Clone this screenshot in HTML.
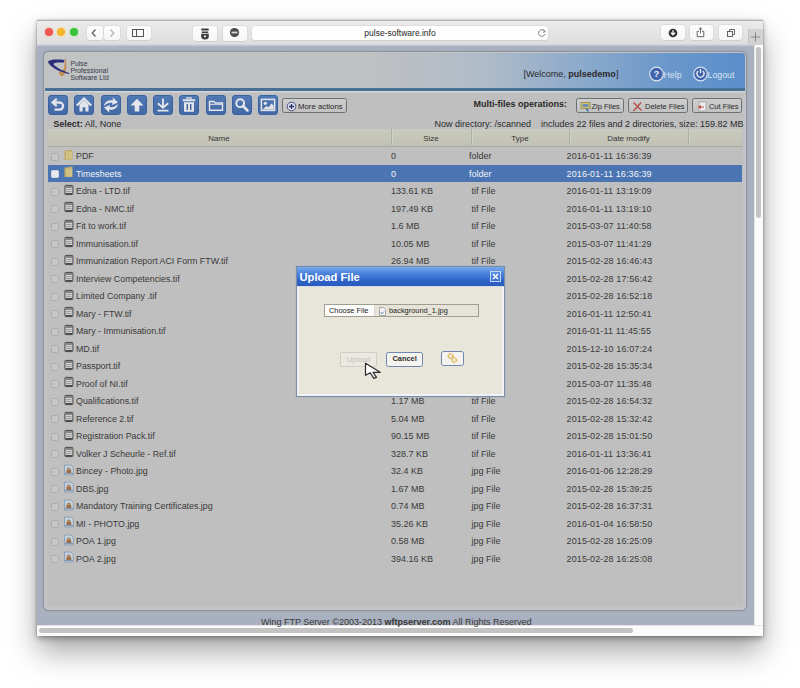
<!DOCTYPE html>
<html><head><meta charset="utf-8">
<style>
*{box-sizing:border-box;margin:0;padding:0}
html,body{width:800px;height:688px;overflow:hidden;background:#fff;font-family:"Liberation Sans",sans-serif;position:relative}
div,span,i,b{position:absolute}
b{position:static}
#win{left:37px;top:20px;width:726px;height:616px;background:#a9b0bf;box-shadow:0 3px 6px rgba(0,0,0,0.28),0 16px 28px rgba(0,0,0,0.34),0 0 2px rgba(0,0,0,0.3)}
#tb{left:37px;top:20px;width:726px;height:24.5px;background:linear-gradient(#ebebeb,#dedede);border-top:1px solid #b3b3b3;border-bottom:1px solid #d6d7dc}
.tl{top:28px;width:8px;height:8px;border-radius:50%}
.tbtn{background:linear-gradient(#fdfdfd,#f6f6f6);border-radius:3px;box-shadow:0 0 0 0.5px #d2d2d2,0 0.5px 0.5px #bcbcbc}
#url{left:252px;top:26px;width:296px;height:14px;background:#fefefe;border-radius:3px;box-shadow:0 0 0 0.5px #d2d2d2,0 0.5px 0.5px #bcbcbc;font-size:8.5px;text-align:center;line-height:14px;color:#1e1e1e}
#panel{left:43.5px;top:52px;width:702.5px;height:557.5px;background:#bfbfbf;border:1.5px solid #c3c4c8;border-top-width:1px;border-radius:4px;overflow:hidden;box-shadow:0 0 0 1.2px #8e949c,inset 2px 0 0 #c3c4c8,inset -2px 0 0 #c0c3c8,inset 0 -2px 0 #c3c4c6}
#hdr{left:0;top:0;width:701px;height:38px;background:linear-gradient(90deg,#c2c3c4 0%,#bfc0c2 46%,#b0bcc8 62%,#8eabcb 76%,#6a97ca 89%,#5a8ecb 100%);border-bottom:3px solid #4a6f94;box-shadow:0 1.5px 0 #d2d6da}
.ico{top:42px;width:20px;height:20px;background:linear-gradient(#5079b5,#4469a4);border:1px solid #3d6099;border-radius:3px;box-shadow:0 0 0 1px #b9c1cd}
.ico svg{margin:-1px}
.ico svg{position:absolute;left:0;top:0}
.btn{height:15px;border:1.3px solid #6c6f74;border-radius:2.5px;background:linear-gradient(#cdcdcd,#c2c2c2);white-space:nowrap}
.bt{top:0.8px;font-size:7.5px;line-height:13px;color:#2a2a2a;white-space:nowrap}
.t{white-space:nowrap;font-size:9px;color:#2a2a2a;line-height:11px}
.row{left:4px;width:694px;height:17.5px;font-size:9px;color:#3a3a3a;line-height:19px;white-space:nowrap}
.row span{top:0}
.sel{background:#4a74b2;color:#f2f4f8}
.cb{left:3px;top:5.5px;width:8px;height:8px;border:1px solid #adadad;background:#c6c6c6;border-radius:1.5px}
.sel .cb{background:#e6e9ee;border-color:#d0d6df}
.c1{left:28px;font-size:8.85px}.c2{left:343px}.c3{left:421px}.c4{left:518.5px;letter-spacing:0.12px}
.fi{position:absolute;left:16px;top:1.5px}
#thead{left:3px;top:75.5px;width:694px;height:18px;background:linear-gradient(#cacbbe,#c1c2b5);border-bottom:1.5px solid #a9aa9f;font-size:8px;color:#363636;line-height:19px}
.th{top:0;height:16.5px;text-align:center;border-right:1px solid #adaea2;box-shadow:1px 0 0 #d0d1c6}
#dlg{left:296px;top:266px;width:208.5px;height:131px;background:#e8e5db;border:1px solid #7e8ba4;box-shadow:0 0 0 0.5px #aab2c0,inset 2px 0 0 #f1f2f4,inset -2px 0 0 #f1f2f4,inset 0 -2px 0 #f1f2f4}
#dlgt{left:0;top:0;width:206.5px;height:20px;background:linear-gradient(#79aaee,#4a82dc 35%,#2d62c6 75%,#2a5cbe);color:#fff;font-weight:bold;font-size:11.2px;line-height:21px;padding-left:2.5px;border-bottom:1px solid #d6dde8}
</style></head><body>
<div id="win"></div>
<div style="left:37px;top:44px;width:717px;height:3px;background:linear-gradient(#d2d5db,#aab0bf)"></div>
<div id="tb">
</div>
<div class="tl" style="left:44.5px;background:#ee5850;box-shadow:0 0 0 1px #f6c9c4"></div>
<div class="tl" style="left:57.3px;background:#f2b52c;box-shadow:0 0 0 1px #f5dfae"></div>
<div class="tl" style="left:70px;background:#3cc33b;box-shadow:0 0 0 1px #c4e8c2"></div>
<div class="tbtn" style="left:87px;top:25.5px;width:15.5px;height:14.5px"></div>
<div class="tbtn" style="left:103.5px;top:25.5px;width:16.5px;height:14.5px"></div>
<svg style="position:absolute;left:87px;top:25px" width="34" height="16"><path d="M8.5 4.5 L5.2 8 L8.5 11.5" fill="none" stroke="#5a5a5a" stroke-width="1.2"/><path d="M23.5 4.5 L26.8 8 L23.5 11.5" fill="none" stroke="#b3b3b3" stroke-width="1.2"/></svg>
<div class="tbtn" style="left:126.5px;top:25.5px;width:24.5px;height:14.5px"></div>
<svg style="position:absolute;left:126px;top:25px" width="26" height="16"><rect x="6.5" y="4.5" width="11" height="7" fill="none" stroke="#555" stroke-width="1"/><line x1="10.5" y1="4.5" x2="10.5" y2="11.5" stroke="#555" stroke-width="1"/></svg>
<div class="tbtn" style="left:192.5px;top:25.5px;width:24.5px;height:15px"></div>
<div class="tbtn" style="left:222.5px;top:25.5px;width:24px;height:15px"></div>
<svg style="position:absolute;left:192px;top:24px" width="56" height="16"><path d="M9.3 4.5 h7.4 v2.1 h-7.4z M9.8 7.5 h6.4 v1.5 h-6.4z M9.2 9.8 h7.6 v2.4 a3.8 3.2 0 0 1 -7.6 0z" fill="#3c3c3c"/><circle cx="13" cy="12.3" r="1.1" fill="#f2f2f2"/><circle cx="42.5" cy="8.5" r="4.6" fill="#4a4a4a"/><path d="M39.5 7.6 h6 v1.8 h-6z" fill="#d8d8d8"/></svg>
<div id="url">pulse-software.info</div>
<svg style="position:absolute;left:535.5px;top:26.5px" width="12" height="12"><path d="M8.6 4.2 A3.3 3.3 0 1 0 9 7" fill="none" stroke="#777" stroke-width="0.9"/><path d="M7.2 2.6 L9.3 4.5 L7 5.4" fill="none" stroke="#777" stroke-width="0.9"/></svg>
<div class="tbtn" style="left:660.5px;top:25px;width:24px;height:15px"></div>
<div class="tbtn" style="left:689.5px;top:25px;width:23.5px;height:15px"></div>
<div class="tbtn" style="left:719px;top:25px;width:23px;height:15px"></div>
<svg style="position:absolute;left:660px;top:24px" width="84" height="18"><circle cx="13" cy="9" r="4.3" fill="#2f2f2f"/><path d="M13 6.3 v4.2 M10.9 8.6 L13 10.8 L15.1 8.6" fill="none" stroke="#fff" stroke-width="1.3"/>
<path d="M39 7.3 h-1.8 v5.4 h6.6 v-5.4 h-1.8" fill="none" stroke="#555" stroke-width="0.9"/><path d="M40.5 9.5 v-5.4 M39 5.3 l1.5 -1.4 l1.5 1.4" fill="none" stroke="#555" stroke-width="0.9"/>
<rect x="67.5" y="7.5" width="5" height="5" fill="none" stroke="#555" stroke-width="0.9"/><path d="M69.5 7.5 v-2 h5 v5 h-2" fill="none" stroke="#555" stroke-width="0.9"/></svg>
<div style="left:748px;top:29px;width:15px;height:16px;background:#d2d2d2;border-left:1px solid #c4c4c4"></div>
<svg style="position:absolute;left:748px;top:29px" width="15" height="16"><path d="M7.5 3.5 v9 M3 8 h9" stroke="#6e6e6e" stroke-width="0.75"/></svg>
<!-- scrollbars -->
<div style="left:754px;top:45px;width:9px;height:580px;background:#fbfbfb;border-left:1px solid #e4e4e4"></div>
<div style="left:756px;top:47px;width:5px;height:171px;background:#c3c3c3;border-radius:3px"></div>
<div style="left:37px;top:625px;width:726px;height:11px;background:#fbfbfb;border-top:1px solid #e4e4e4"></div>
<div style="left:39px;top:628px;width:594px;height:5px;background:#c3c3c3;border-radius:3px"></div>

<div id="panel">
  <div id="hdr">
    <svg style="position:absolute;left:2px;top:2px" width="72" height="30">
      <path d="M18.2 1.8 C19.5 5 19.8 10 19 15 C18.6 18 17.5 20.5 15 21.5 C13 20.5 11.8 18.5 11.5 16.5 C14 17.5 16.5 16 17.2 12 C17.8 8.5 17.8 5 18.2 1.8z" fill="#c8884a" opacity="0.9"/>
      <path d="M0.8 6.8 C2.5 4.5 9 4.2 17.5 5 L17 7.6 C12 7.2 7.5 7.5 6.5 9 C8 12 15 15.5 22.8 18.2 L21.5 19 C13 17 3 12.5 0.8 6.8z" fill="#2b2f7a"/>
      <text x="23.5" y="11" font-size="6.8" fill="#353a4a" font-family="Liberation Sans">Pulse</text>
      <text x="23.5" y="18" font-size="6.8" fill="#353a4a" font-family="Liberation Sans">Professional</text>
      <text x="23.5" y="25" font-size="6.8" fill="#353a4a" font-family="Liberation Sans">Software Ltd</text>
    </svg>
    <div class="t" style="left:479px;top:16px;color:#2a2a2a;font-size:9px">[Welcome, <b>pulsedemo</b>]</div>
    <svg style="position:absolute;left:602px;top:12px" width="96" height="18">
      <circle cx="9.5" cy="9" r="6.8" fill="#4264ab" stroke="#d9e3ef" stroke-width="1.2"/>
      <text x="9.5" y="12.3" font-size="9.5" font-weight="bold" fill="#e9eef8" text-anchor="middle" font-family="Liberation Sans">?</text>
      <circle cx="53.5" cy="9" r="6.8" fill="#4264ab" stroke="#d9e3ef" stroke-width="1.2"/>
      <path d="M51 6 A3.6 3.6 0 1 0 56 6" fill="none" stroke="#e9eef8" stroke-width="1.4"/><path d="M53.5 4 v4" stroke="#e9eef8" stroke-width="1.4"/>
    </svg>
    <div class="t" style="left:619px;top:16.5px;color:#dae4f0;font-size:8.8px">Help</div>
    <div class="t" style="left:663px;top:16.5px;color:#dae4f0;font-size:8.8px">Logout</div>
  </div>
  <!-- toolbar -->
  <div class="ico" style="left:3px"><svg width="20" height="20"><path d="M6 7.5 H11.5 A3.6 3.6 0 0 1 11.5 14.7 H6.5" fill="none" stroke="#e3e5ea" stroke-width="2.3"/><path d="M8.8 3.8 L4.6 7.5 L8.8 11.2" fill="none" stroke="#e3e5ea" stroke-width="2.3"/></svg></div>
  <div class="ico" style="left:29.5px"><svg width="20" height="20"><path d="M2.8 10.5 L10 3.6 L17.2 10.5" fill="none" stroke="#e3e5ea" stroke-width="2.2"/><path d="M5.5 9.5 L10 5.5 L14.5 9.5 V16.5 H11.4 V12.3 H8.6 V16.5 H5.5z" fill="#e3e5ea"/></svg></div>
  <div class="ico" style="left:56px"><svg width="20" height="20"><path d="M3 11.2 C3.3 6.5 8 4.6 12 5.3 L11.6 2.2 L17 7.4 L11 9.9 L11.5 7.9 C8 7.2 4.8 8.6 3 11.2z" fill="#e3e5ea"/><path d="M17 8.8 C16.7 13.5 12 15.4 8 14.7 L8.4 17.8 L3 12.6 L9 10.1 L8.5 12.1 C12 12.8 15.2 11.4 17 8.8z" fill="#e3e5ea"/></svg></div>
  <div class="ico" style="left:82px"><svg width="20" height="20"><path d="M3.5 10.5 L10 3.8 L16.5 10.5 H12.3 V16.5 H7.7 V10.5z" fill="#e3e5ea"/></svg></div>
  <div class="ico" style="left:108px"><svg width="20" height="20"><path d="M10 3.5 V12.5 M4.8 8.2 L10 12.8 L15.2 8.2 M4.5 15.6 H15.5" fill="none" stroke="#e3e5ea" stroke-width="1.9"/></svg></div>
  <div class="ico" style="left:134.5px"><svg width="20" height="20"><path d="M3.8 5.2 H16.2" stroke="#e3e5ea" stroke-width="2"/><path d="M8 4.2 V2.8 H12 V4.2" fill="none" stroke="#e3e5ea" stroke-width="1.3"/><path d="M5 7.2 H15 V16.8 H5z" fill="#e3e5ea"/><path d="M8.3 9 V15 M11.7 9 V15" stroke="#3f5f8f" stroke-width="1.4"/></svg></div>
  <div class="ico" style="left:161px"><svg width="20" height="20"><path d="M3.5 6.5 H8 L9.3 8 H16.5 V15.3 H3.5z" fill="none" stroke="#e3e5ea" stroke-width="1.4"/><path d="M3.5 9.3 H16.5" stroke="#e3e5ea" stroke-width="1"/></svg></div>
  <div class="ico" style="left:187px"><svg width="20" height="20"><circle cx="8.2" cy="8.2" r="3.9" fill="none" stroke="#e3e5ea" stroke-width="2"/><path d="M11 11 L15.5 15.5" stroke="#e3e5ea" stroke-width="2.6" stroke-linecap="round"/></svg></div>
  <div class="ico" style="left:213.5px"><svg width="20" height="20"><rect x="3.4" y="4.4" width="13.2" height="11" fill="none" stroke="#e3e5ea" stroke-width="1.5"/><circle cx="7.3" cy="8.3" r="1.6" fill="#e3e5ea"/><path d="M4.5 14.5 L8.5 11 L10.5 12.2 L13.5 8.5 L15.6 10.5 V14.5z" fill="#e3e5ea"/></svg></div>
  <div class="btn" style="left:237.5px;top:45px;width:64.5px"><svg style="position:absolute;left:3px;top:1.7px" width="11" height="11"><circle cx="5.5" cy="5.5" r="4.3" fill="#dadfea" stroke="#4a4f80" stroke-width="1"/><path d="M5.5 3 V8 M3 5.5 H8" stroke="#2c3170" stroke-width="1.3"/></svg><span class="bt" style="left:15px;font-size:7.8px">More actions</span></div>
  <div class="t" style="left:429px;top:46px;font-weight:bold;font-size:9px">Multi-files operations:</div>
  <div class="btn" style="left:531px;top:45px;width:48.5px"><svg style="position:absolute;left:3px;top:2px" width="12" height="11"><rect x="1" y="1.5" width="9" height="6" fill="#d9c35a" stroke="#8c8c6a" stroke-width="0.8"/><rect x="2.5" y="3" width="6" height="3" fill="#6f8fb8"/><path d="M6 7.5 L8.5 10.5" stroke="#3a6aa8" stroke-width="1.2"/></svg><span class="bt" style="left:15px">Zip Files</span></div>
  <div class="btn" style="left:583.5px;top:45px;width:59.5px"><svg style="position:absolute;left:3px;top:2px" width="11" height="11"><path d="M1.5 1.5 L9.5 9.5 M9 1.5 L1.5 10" stroke="#b84a44" stroke-width="1.3"/></svg><span class="bt" style="left:16px">Delete Files</span></div>
  <div class="btn" style="left:647.4px;top:45px;width:50px"><svg style="position:absolute;left:3px;top:2px" width="12" height="11"><rect x="3" y="1" width="7" height="9" fill="#ececec" stroke="#9a9a9a" stroke-width="0.7"/><path d="M1.5 6 L5 4 L5 8z" fill="#c0504a"/><path d="M4.5 6 H8" stroke="#c0504a" stroke-width="1"/></svg><span class="bt" style="left:16px">Cut Files</span></div>
  <div class="t" style="left:8.8px;top:66px;font-size:9px"><b>Select:</b> All, None</div>
  <div class="t" style="left:390px;top:66px;font-size:9px">Now directory: /scanned</div>
  <div class="t" style="left:496.5px;top:66px;font-size:9px">includes 22 files and 2 directories, size: 159.82 MB</div>
  <div id="thead">
    <div class="th" style="left:0;width:344px">Name</div>
    <div class="th" style="left:344px;width:80px">Size</div>
    <div class="th" style="left:424px;width:98px">Type</div>
    <div class="th" style="left:522px;width:119px">Date modify</div>
  </div>
</div>
<div id="rows" style="left:44px;top:0;width:703px;height:611px">
<div class="row" style="top:147.0px"><i class="cb"></i><svg class="fi" width="10" height="12"><path d="M0.5 1.5 H3.5 L4.3 0.8 H8.5 V11 H0.5z" fill="#c2ad6e"/><path d="M1 2.6 H8 V10.5 H1z" fill="#d3c288"/><path d="M1.3 2.6 V10.5" stroke="#b09a58" stroke-width="0.8"/><path d="M4.6 2.6 V10.5" stroke="#c4b172" stroke-width="0.6"/></svg><span class="c1">PDF</span><span class="c2">0</span><span class="c3" style="left:421px">folder</span><span class="c4">2016-01-11 16:36:39</span></div>
<div class="row sel" style="top:164.5px"><i class="cb"></i><svg class="fi" width="10" height="12"><path d="M0.5 1.5 H3.5 L4.3 0.8 H8.5 V11 H0.5z" fill="#c2ad6e"/><path d="M1 2.6 H8 V10.5 H1z" fill="#d3c288"/><path d="M1.3 2.6 V10.5" stroke="#b09a58" stroke-width="0.8"/><path d="M4.6 2.6 V10.5" stroke="#c4b172" stroke-width="0.6"/></svg><span class="c1">Timesheets</span><span class="c2">0</span><span class="c3" style="left:421px">folder</span><span class="c4">2016-01-11 16:36:39</span></div>
<div class="row" style="top:182.0px"><i class="cb"></i><svg class="fi" width="10" height="12"><rect x="0.9" y="1.4" width="8" height="9.2" rx="0.8" fill="#d2d2d2" stroke="#474747" stroke-width="1"/><path d="M1.5 3 H8.3" stroke="#5a5a5a" stroke-width="1.3"/><path d="M2.2 5.6 H7.6 M2.2 7.6 H7.6" stroke="#8a8a8a" stroke-width="0.8"/><path d="M1.5 9.6 H8.3" stroke="#3c3c3c" stroke-width="1"/></svg><span class="c1">Edna - LTD.tif</span><span class="c2">133.61 KB</span><span class="c3" style="left:423.5px">tif File</span><span class="c4">2016-01-11 13:19:09</span></div>
<div class="row" style="top:199.5px"><i class="cb"></i><svg class="fi" width="10" height="12"><rect x="0.9" y="1.4" width="8" height="9.2" rx="0.8" fill="#d2d2d2" stroke="#474747" stroke-width="1"/><path d="M1.5 3 H8.3" stroke="#5a5a5a" stroke-width="1.3"/><path d="M2.2 5.6 H7.6 M2.2 7.6 H7.6" stroke="#8a8a8a" stroke-width="0.8"/><path d="M1.5 9.6 H8.3" stroke="#3c3c3c" stroke-width="1"/></svg><span class="c1">Edna - NMC.tif</span><span class="c2">197.49 KB</span><span class="c3" style="left:423.5px">tif File</span><span class="c4">2016-01-11 13:19:10</span></div>
<div class="row" style="top:217.0px"><i class="cb"></i><svg class="fi" width="10" height="12"><rect x="0.9" y="1.4" width="8" height="9.2" rx="0.8" fill="#d2d2d2" stroke="#474747" stroke-width="1"/><path d="M1.5 3 H8.3" stroke="#5a5a5a" stroke-width="1.3"/><path d="M2.2 5.6 H7.6 M2.2 7.6 H7.6" stroke="#8a8a8a" stroke-width="0.8"/><path d="M1.5 9.6 H8.3" stroke="#3c3c3c" stroke-width="1"/></svg><span class="c1">Fit to work.tif</span><span class="c2">1.6 MB</span><span class="c3" style="left:423.5px">tif File</span><span class="c4">2015-03-07 11:40:58</span></div>
<div class="row" style="top:234.5px"><i class="cb"></i><svg class="fi" width="10" height="12"><rect x="0.9" y="1.4" width="8" height="9.2" rx="0.8" fill="#d2d2d2" stroke="#474747" stroke-width="1"/><path d="M1.5 3 H8.3" stroke="#5a5a5a" stroke-width="1.3"/><path d="M2.2 5.6 H7.6 M2.2 7.6 H7.6" stroke="#8a8a8a" stroke-width="0.8"/><path d="M1.5 9.6 H8.3" stroke="#3c3c3c" stroke-width="1"/></svg><span class="c1">Immunisation.tif</span><span class="c2">10.05 MB</span><span class="c3" style="left:423.5px">tif File</span><span class="c4">2015-03-07 11:41:29</span></div>
<div class="row" style="top:252.0px"><i class="cb"></i><svg class="fi" width="10" height="12"><rect x="0.9" y="1.4" width="8" height="9.2" rx="0.8" fill="#d2d2d2" stroke="#474747" stroke-width="1"/><path d="M1.5 3 H8.3" stroke="#5a5a5a" stroke-width="1.3"/><path d="M2.2 5.6 H7.6 M2.2 7.6 H7.6" stroke="#8a8a8a" stroke-width="0.8"/><path d="M1.5 9.6 H8.3" stroke="#3c3c3c" stroke-width="1"/></svg><span class="c1">Immunization Report ACI Form FTW.tif</span><span class="c2">26.94 MB</span><span class="c3" style="left:423.5px">tif File</span><span class="c4">2015-02-28 16:46:43</span></div>
<div class="row" style="top:269.5px"><i class="cb"></i><svg class="fi" width="10" height="12"><rect x="0.9" y="1.4" width="8" height="9.2" rx="0.8" fill="#d2d2d2" stroke="#474747" stroke-width="1"/><path d="M1.5 3 H8.3" stroke="#5a5a5a" stroke-width="1.3"/><path d="M2.2 5.6 H7.6 M2.2 7.6 H7.6" stroke="#8a8a8a" stroke-width="0.8"/><path d="M1.5 9.6 H8.3" stroke="#3c3c3c" stroke-width="1"/></svg><span class="c1">Interview Competencies.tif</span><span class="c2">2.51 MB</span><span class="c3" style="left:423.5px">tif File</span><span class="c4">2015-02-28 17:56:42</span></div>
<div class="row" style="top:287.0px"><i class="cb"></i><svg class="fi" width="10" height="12"><rect x="0.9" y="1.4" width="8" height="9.2" rx="0.8" fill="#d2d2d2" stroke="#474747" stroke-width="1"/><path d="M1.5 3 H8.3" stroke="#5a5a5a" stroke-width="1.3"/><path d="M2.2 5.6 H7.6 M2.2 7.6 H7.6" stroke="#8a8a8a" stroke-width="0.8"/><path d="M1.5 9.6 H8.3" stroke="#3c3c3c" stroke-width="1"/></svg><span class="c1">Limited Company .tif</span><span class="c2">1.02 MB</span><span class="c3" style="left:423.5px">tif File</span><span class="c4">2015-02-28 16:52:18</span></div>
<div class="row" style="top:304.5px"><i class="cb"></i><svg class="fi" width="10" height="12"><rect x="0.9" y="1.4" width="8" height="9.2" rx="0.8" fill="#d2d2d2" stroke="#474747" stroke-width="1"/><path d="M1.5 3 H8.3" stroke="#5a5a5a" stroke-width="1.3"/><path d="M2.2 5.6 H7.6 M2.2 7.6 H7.6" stroke="#8a8a8a" stroke-width="0.8"/><path d="M1.5 9.6 H8.3" stroke="#3c3c3c" stroke-width="1"/></svg><span class="c1">Mary - FTW.tif</span><span class="c2">4.22 MB</span><span class="c3" style="left:423.5px">tif File</span><span class="c4">2016-01-11 12:50:41</span></div>
<div class="row" style="top:322.0px"><i class="cb"></i><svg class="fi" width="10" height="12"><rect x="0.9" y="1.4" width="8" height="9.2" rx="0.8" fill="#d2d2d2" stroke="#474747" stroke-width="1"/><path d="M1.5 3 H8.3" stroke="#5a5a5a" stroke-width="1.3"/><path d="M2.2 5.6 H7.6 M2.2 7.6 H7.6" stroke="#8a8a8a" stroke-width="0.8"/><path d="M1.5 9.6 H8.3" stroke="#3c3c3c" stroke-width="1"/></svg><span class="c1">Mary - Immunisation.tif</span><span class="c2">3.85 MB</span><span class="c3" style="left:423.5px">tif File</span><span class="c4">2016-01-11 11:45:55</span></div>
<div class="row" style="top:339.5px"><i class="cb"></i><svg class="fi" width="10" height="12"><rect x="0.9" y="1.4" width="8" height="9.2" rx="0.8" fill="#d2d2d2" stroke="#474747" stroke-width="1"/><path d="M1.5 3 H8.3" stroke="#5a5a5a" stroke-width="1.3"/><path d="M2.2 5.6 H7.6 M2.2 7.6 H7.6" stroke="#8a8a8a" stroke-width="0.8"/><path d="M1.5 9.6 H8.3" stroke="#3c3c3c" stroke-width="1"/></svg><span class="c1">MD.tif</span><span class="c2">1.12 MB</span><span class="c3" style="left:423.5px">tif File</span><span class="c4">2015-12-10 16:07:24</span></div>
<div class="row" style="top:357.0px"><i class="cb"></i><svg class="fi" width="10" height="12"><rect x="0.9" y="1.4" width="8" height="9.2" rx="0.8" fill="#d2d2d2" stroke="#474747" stroke-width="1"/><path d="M1.5 3 H8.3" stroke="#5a5a5a" stroke-width="1.3"/><path d="M2.2 5.6 H7.6 M2.2 7.6 H7.6" stroke="#8a8a8a" stroke-width="0.8"/><path d="M1.5 9.6 H8.3" stroke="#3c3c3c" stroke-width="1"/></svg><span class="c1">Passport.tif</span><span class="c2">1.44 MB</span><span class="c3" style="left:423.5px">tif File</span><span class="c4">2015-02-28 15:35:34</span></div>
<div class="row" style="top:374.5px"><i class="cb"></i><svg class="fi" width="10" height="12"><rect x="0.9" y="1.4" width="8" height="9.2" rx="0.8" fill="#d2d2d2" stroke="#474747" stroke-width="1"/><path d="M1.5 3 H8.3" stroke="#5a5a5a" stroke-width="1.3"/><path d="M2.2 5.6 H7.6 M2.2 7.6 H7.6" stroke="#8a8a8a" stroke-width="0.8"/><path d="M1.5 9.6 H8.3" stroke="#3c3c3c" stroke-width="1"/></svg><span class="c1">Proof of NI.tif</span><span class="c2">0.98 MB</span><span class="c3" style="left:423.5px">tif File</span><span class="c4">2015-03-07 11:35:48</span></div>
<div class="row" style="top:392.0px"><i class="cb"></i><svg class="fi" width="10" height="12"><rect x="0.9" y="1.4" width="8" height="9.2" rx="0.8" fill="#d2d2d2" stroke="#474747" stroke-width="1"/><path d="M1.5 3 H8.3" stroke="#5a5a5a" stroke-width="1.3"/><path d="M2.2 5.6 H7.6 M2.2 7.6 H7.6" stroke="#8a8a8a" stroke-width="0.8"/><path d="M1.5 9.6 H8.3" stroke="#3c3c3c" stroke-width="1"/></svg><span class="c1">Qualifications.tif</span><span class="c2">1.17 MB</span><span class="c3" style="left:423.5px">tif File</span><span class="c4">2015-02-28 16:54:32</span></div>
<div class="row" style="top:409.5px"><i class="cb"></i><svg class="fi" width="10" height="12"><rect x="0.9" y="1.4" width="8" height="9.2" rx="0.8" fill="#d2d2d2" stroke="#474747" stroke-width="1"/><path d="M1.5 3 H8.3" stroke="#5a5a5a" stroke-width="1.3"/><path d="M2.2 5.6 H7.6 M2.2 7.6 H7.6" stroke="#8a8a8a" stroke-width="0.8"/><path d="M1.5 9.6 H8.3" stroke="#3c3c3c" stroke-width="1"/></svg><span class="c1">Reference 2.tif</span><span class="c2">5.04 MB</span><span class="c3" style="left:423.5px">tif File</span><span class="c4">2015-02-28 15:32:42</span></div>
<div class="row" style="top:427.0px"><i class="cb"></i><svg class="fi" width="10" height="12"><rect x="0.9" y="1.4" width="8" height="9.2" rx="0.8" fill="#d2d2d2" stroke="#474747" stroke-width="1"/><path d="M1.5 3 H8.3" stroke="#5a5a5a" stroke-width="1.3"/><path d="M2.2 5.6 H7.6 M2.2 7.6 H7.6" stroke="#8a8a8a" stroke-width="0.8"/><path d="M1.5 9.6 H8.3" stroke="#3c3c3c" stroke-width="1"/></svg><span class="c1">Registration Pack.tif</span><span class="c2">90.15 MB</span><span class="c3" style="left:423.5px">tif File</span><span class="c4">2015-02-28 15:01:50</span></div>
<div class="row" style="top:444.5px"><i class="cb"></i><svg class="fi" width="10" height="12"><rect x="0.9" y="1.4" width="8" height="9.2" rx="0.8" fill="#d2d2d2" stroke="#474747" stroke-width="1"/><path d="M1.5 3 H8.3" stroke="#5a5a5a" stroke-width="1.3"/><path d="M2.2 5.6 H7.6 M2.2 7.6 H7.6" stroke="#8a8a8a" stroke-width="0.8"/><path d="M1.5 9.6 H8.3" stroke="#3c3c3c" stroke-width="1"/></svg><span class="c1">Volker J Scheurle - Ref.tif</span><span class="c2">328.7 KB</span><span class="c3" style="left:423.5px">tif File</span><span class="c4">2016-01-11 13:36:41</span></div>
<div class="row" style="top:462.0px"><i class="cb"></i><svg class="fi" width="10" height="12"><path d="M0.5 1 H7 L9.3 3.3 V11 H0.5z" fill="#c3d0de" stroke="#8397b0" stroke-width="0.8"/><path d="M2.3 9 C2.3 6 3 4 4.8 3.6 C6.6 4 7.3 6 7.3 9z" fill="#9c6f4a"/><path d="M3 5.2 H6.6" stroke="#d9b98f" stroke-width="0.7"/><path d="M1 9.6 H9" stroke="#7d93ad" stroke-width="1"/></svg><span class="c1">Bincey - Photo.jpg</span><span class="c2">32.4 KB</span><span class="c3" style="left:423.5px">jpg File</span><span class="c4">2016-01-06 12:28:29</span></div>
<div class="row" style="top:479.5px"><i class="cb"></i><svg class="fi" width="10" height="12"><path d="M0.5 1 H7 L9.3 3.3 V11 H0.5z" fill="#c3d0de" stroke="#8397b0" stroke-width="0.8"/><path d="M2.3 9 C2.3 6 3 4 4.8 3.6 C6.6 4 7.3 6 7.3 9z" fill="#9c6f4a"/><path d="M3 5.2 H6.6" stroke="#d9b98f" stroke-width="0.7"/><path d="M1 9.6 H9" stroke="#7d93ad" stroke-width="1"/></svg><span class="c1">DBS.jpg</span><span class="c2">1.67 MB</span><span class="c3" style="left:423.5px">jpg File</span><span class="c4">2015-02-28 15:39:25</span></div>
<div class="row" style="top:497.0px"><i class="cb"></i><svg class="fi" width="10" height="12"><path d="M0.5 1 H7 L9.3 3.3 V11 H0.5z" fill="#c3d0de" stroke="#8397b0" stroke-width="0.8"/><path d="M2.3 9 C2.3 6 3 4 4.8 3.6 C6.6 4 7.3 6 7.3 9z" fill="#9c6f4a"/><path d="M3 5.2 H6.6" stroke="#d9b98f" stroke-width="0.7"/><path d="M1 9.6 H9" stroke="#7d93ad" stroke-width="1"/></svg><span class="c1">Mandatory Training Certificates.jpg</span><span class="c2">0.74 MB</span><span class="c3" style="left:423.5px">jpg File</span><span class="c4">2015-02-28 16:37:31</span></div>
<div class="row" style="top:514.5px"><i class="cb"></i><svg class="fi" width="10" height="12"><path d="M0.5 1 H7 L9.3 3.3 V11 H0.5z" fill="#c3d0de" stroke="#8397b0" stroke-width="0.8"/><path d="M2.3 9 C2.3 6 3 4 4.8 3.6 C6.6 4 7.3 6 7.3 9z" fill="#9c6f4a"/><path d="M3 5.2 H6.6" stroke="#d9b98f" stroke-width="0.7"/><path d="M1 9.6 H9" stroke="#7d93ad" stroke-width="1"/></svg><span class="c1">MI - PHOTO.jpg</span><span class="c2">35.26 KB</span><span class="c3" style="left:423.5px">jpg File</span><span class="c4">2016-01-04 16:58:50</span></div>
<div class="row" style="top:532.0px"><i class="cb"></i><svg class="fi" width="10" height="12"><path d="M0.5 1 H7 L9.3 3.3 V11 H0.5z" fill="#c3d0de" stroke="#8397b0" stroke-width="0.8"/><path d="M2.3 9 C2.3 6 3 4 4.8 3.6 C6.6 4 7.3 6 7.3 9z" fill="#9c6f4a"/><path d="M3 5.2 H6.6" stroke="#d9b98f" stroke-width="0.7"/><path d="M1 9.6 H9" stroke="#7d93ad" stroke-width="1"/></svg><span class="c1">POA 1.jpg</span><span class="c2">0.58 MB</span><span class="c3" style="left:423.5px">jpg File</span><span class="c4">2015-02-28 16:25:09</span></div>
<div class="row" style="top:549.5px"><i class="cb"></i><svg class="fi" width="10" height="12"><path d="M0.5 1 H7 L9.3 3.3 V11 H0.5z" fill="#c3d0de" stroke="#8397b0" stroke-width="0.8"/><path d="M2.3 9 C2.3 6 3 4 4.8 3.6 C6.6 4 7.3 6 7.3 9z" fill="#9c6f4a"/><path d="M3 5.2 H6.6" stroke="#d9b98f" stroke-width="0.7"/><path d="M1 9.6 H9" stroke="#7d93ad" stroke-width="1"/></svg><span class="c1">POA 2.jpg</span><span class="c2">394.16 KB</span><span class="c3" style="left:423.5px">jpg File</span><span class="c4">2015-02-28 16:25:08</span></div>
</div>
<div class="t" style="left:261px;top:616.7px;font-size:9px;color:#383838">Wing FTP Server ©2003-2013 <b>wftpserver.com</b> All Rights Reserved</div>

<div id="dlg">
  <div id="dlgt">Upload File</div>
  <div style="left:193px;top:4px;width:11px;height:11px;border:1px solid #c3d5f0;background:linear-gradient(#5b8fe0,#3c70cf)"></div>
  <svg style="position:absolute;left:193px;top:4px" width="11" height="11"><path d="M3 3 L8 8 M8 3 L3 8" stroke="#fff" stroke-width="1.5"/></svg>
  <div style="left:26.5px;top:37px;width:155px;height:13px;border:1px solid #a09f92;background:#e6e3d9"></div>
  <div style="left:27.5px;top:38px;width:50px;height:11px;background:#fbfbfa;border-right:1px solid #d8d6cf"></div>
  <span style="left:32px;top:38px;font-size:7.4px;line-height:11px;color:#222;white-space:nowrap">Choose File</span>
  <svg style="position:absolute;left:82px;top:39.5px" width="7" height="9"><path d="M0.5 0.5 H4.5 L6.5 2.5 V8.5 H0.5z" fill="#f4f4f4" stroke="#8c8c8c" stroke-width="0.7"/><path d="M1.5 5 L3 7 L5 4.5" fill="none" stroke="#5a7fb5" stroke-width="0.8"/></svg>
  <span style="left:92px;top:38px;font-size:7.4px;line-height:11px;color:#222;white-space:nowrap">background_1.jpg</span>
  <div style="left:42.5px;top:85px;width:37px;height:14.5px;border:1px solid #cfcdc6;border-radius:2px;background:#ebe9e2"></div>
  <span style="left:50px;top:86px;font-size:7.4px;line-height:13px;color:#c3c2bd;white-space:nowrap">Upload</span>
  <div style="left:88.5px;top:85px;width:37px;height:15px;border:1.5px solid #6f86ad;border-radius:2.5px;background:#f4f3ef"></div>
  <span style="left:95.5px;top:85px;font-size:7.4px;font-weight:bold;line-height:13px;color:#2e2e2e;white-space:nowrap">Cancel</span>
  <div style="left:143.5px;top:83.5px;width:23.5px;height:15px;border:1.5px solid #6f86ad;border-radius:2.5px;background:#f4f3ef"></div>
  <svg style="position:absolute;left:149px;top:85px" width="13" height="12"><circle cx="4.5" cy="4" r="2.1" fill="none" stroke="#dba53a" stroke-width="1.3" stroke-dasharray="1.2 0.6"/><circle cx="4.5" cy="4" r="2.9" fill="none" stroke="#e5b95a" stroke-width="0.7" stroke-dasharray="0.9 1.2"/><circle cx="8.2" cy="8" r="2.1" fill="none" stroke="#dba53a" stroke-width="1.3" stroke-dasharray="1.2 0.6"/><circle cx="8.2" cy="8" r="2.9" fill="none" stroke="#e5b95a" stroke-width="0.7" stroke-dasharray="0.9 1.2"/></svg>
</div>
<svg style="position:absolute;left:364px;top:362px" width="19" height="19"><path d="M1.5 1.3 L1.5 13.3 L6.2 10.7 L9.8 16.4 L12.5 15.4 L9 10.3 L16.2 10.3 Z" fill="#fff" stroke="#2a2a2a" stroke-width="1.2" stroke-linejoin="round"/></svg>
</body></html>
